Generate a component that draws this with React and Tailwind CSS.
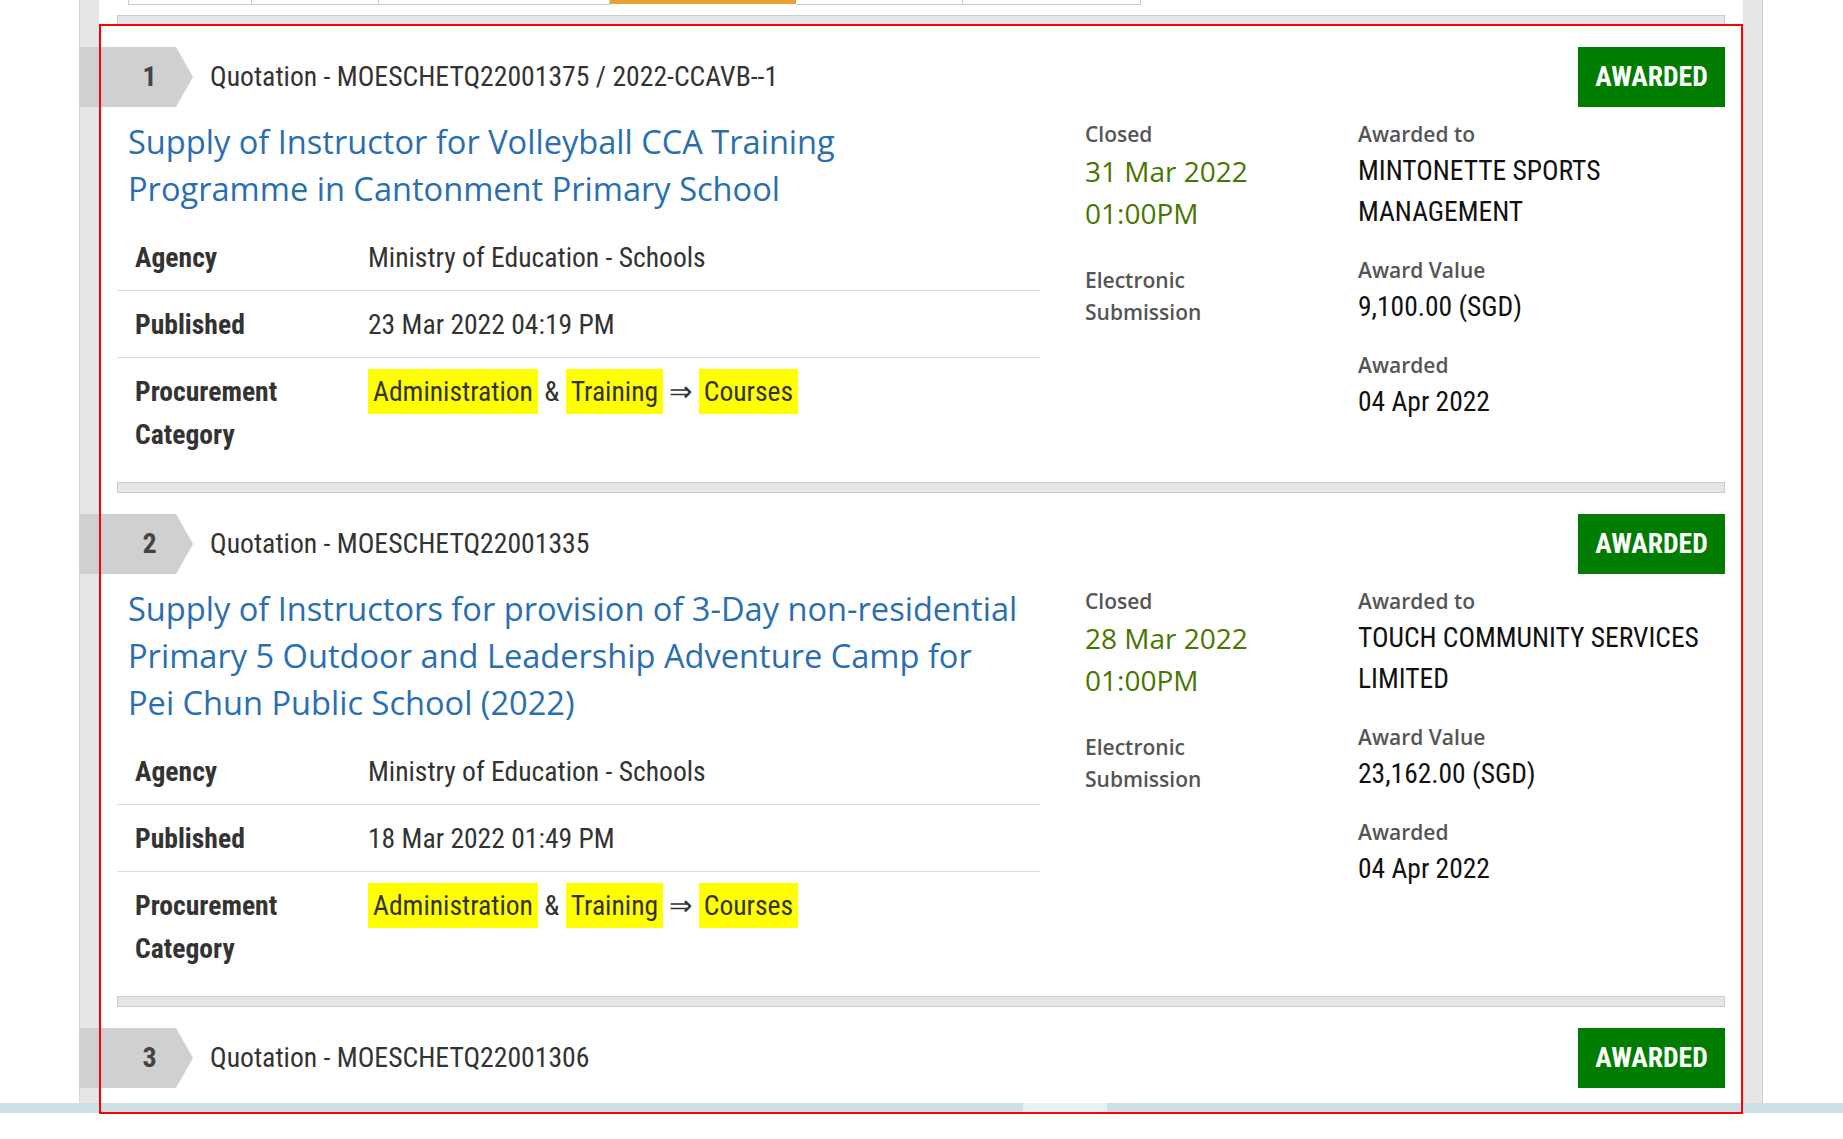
import React from 'react';

const tabs = [124, 127, 231, 186, 167, 178];

const tenders = [
  {
    no: 1,
    ref: 'Quotation - MOESCHETQ22001375 / 2022-CCAVB--1',
    title: ['Supply of Instructor for Volleyball CCA Training', 'Programme in Cantonment Primary School'],
    agency: 'Ministry of Education - Schools',
    published: '23 Mar 2022 04:19 PM',
    closedDate: '31 Mar 2022',
    closedTime: '01:00PM',
    awardedTo: 'MINTONETTE SPORTS MANAGEMENT',
    value: '9,100.00 (SGD)',
    awardedOn: '04 Apr 2022',
  },
  {
    no: 2,
    ref: 'Quotation - MOESCHETQ22001335',
    title: [
      'Supply of Instructors for provision of 3-Day non-residential',
      'Primary 5 Outdoor and Leadership Adventure Camp for',
      'Pei Chun Public School (2022)',
    ],
    agency: 'Ministry of Education - Schools',
    published: '18 Mar 2022 01:49 PM',
    closedDate: '28 Mar 2022',
    closedTime: '01:00PM',
    awardedTo: 'TOUCH COMMUNITY SERVICES LIMITED',
    value: '23,162.00 (SGD)',
    awardedOn: '04 Apr 2022',
  },
  {
    no: 3,
    ref: 'Quotation - MOESCHETQ22001306',
  },
];

const Mark = ({ children }) => (
  <span className="bg-[#ffff00] px-[5px] py-[6px]">{children}</span>
);

const Label = ({ children }) => (
  <div className="font-['Open_Sans',sans-serif] text-[21px] font-semibold leading-[32px] text-[#555]">{children}</div>
);

const TenderRow = ({ t }) => (
  <div>
    {/* header */}
    <div className="-ml-[38px] flex h-[60px] items-center">
      <div className="flex h-[60px] w-[114px] shrink-0 items-center bg-[#d0d0d0] [clip-path:polygon(0_0,97px_0,114px_50%,97px_100%,0_100%)]">
        <span className="w-[97px] pl-[44px] text-center text-[28px] font-bold text-[#444]">{t.no}</span>
      </div>
      <span className="ml-[17px] text-[27.7px] text-[#333]">{t.ref}</span>
      <span className="ml-auto flex h-[60px] w-[147px] items-center justify-center bg-[#007c00] text-[27.6px] font-bold text-white">
        AWARDED
      </span>
    </div>

    {t.title && (
      <div className="mt-[11px] flex items-start">
        <div className="w-[923px] shrink-0">
          <div className="pl-[11px] font-['Open_Sans',sans-serif] text-[32.6px] leading-[47px] text-[#2a6eb2]">
            {t.title.map((line) => (
              <span key={line} className="block whitespace-nowrap">{line}</span>
            ))}
          </div>
          <div className="mt-[12px] text-[27.6px] leading-[43px] text-[#333]">
            <div className="flex border-b border-[#ddd] pt-[12px] pb-[11px]">
              <div className="w-[251px] shrink-0 pl-[18px] font-bold">Agency</div>
              <div>{t.agency}</div>
            </div>
            <div className="flex border-b border-[#ddd] pt-[12px] pb-[11px]">
              <div className="w-[251px] shrink-0 pl-[18px] font-bold">Published</div>
              <div>{t.published}</div>
            </div>
            <div className="flex pt-[12px] pb-[15px]">
              <div className="w-[251px] shrink-0 pl-[18px] font-bold">
                Procurement
                <br />
                Category
              </div>
              <div>
                <Mark>Administration</Mark> &amp; <Mark>Training</Mark> ⇒ <Mark>Courses</Mark>
              </div>
            </div>
          </div>
        </div>

        <div className="ml-[45px] w-[273px] shrink-0 pr-[70px]">
          <Label>Closed</Label>
          <div className="font-['Open_Sans',sans-serif] text-[28px] leading-[42px] text-[#4a7500]">
            {t.closedDate}
            <br />
            {t.closedTime}
          </div>
          <div className="mt-[30px]">
            <Label>Electronic Submission</Label>
          </div>
        </div>

        <div className="flex-1 text-[27.5px] leading-[41px] text-[#111]">
          <Label>Awarded to</Label>
          <div className="mb-[22px]">{t.awardedTo}</div>
          <Label>Award Value</Label>
          <div className="mb-[22px]">{t.value}</div>
          <Label>Awarded</Label>
          <div>{t.awardedOn}</div>
        </div>
      </div>
    )}

    {t.title && <div className="mt-[11px] mb-[21px] h-[11px] border border-[#ccc] bg-[#e6e6e6]" />}
  </div>
);

export default function App() {
  return (
    <div className="relative h-[1139px] w-full overflow-hidden bg-white font-['Roboto_Condensed',sans-serif]">
      <div className="flex h-[1103px] overflow-hidden">
        <div className="w-[79px] shrink-0" />
        <div className="w-[20px] shrink-0 border-l border-[#d6d6d6] bg-[#e6e6e6]" />
        <main className="w-[1644px] shrink-0 bg-white px-[18px]">
          {/* tabs, cut off at the top */}
          <div className="ml-[11px] flex h-[5px]">
            {tabs.map((w, i) => (
              <div
                key={i}
                style={{ width: w }}
                className={
                  i === 3
                    ? 'h-[4px] bg-[#e8a030]'
                    : i === 0
                    ? 'border-x border-b border-[#ccc]'
                    : 'border-r border-b border-[#ccc]'
                }
              />
            ))}
          </div>
          <div className="mt-[10px] mb-[21px] h-[11px] border border-[#ccc] bg-[#e6e6e6]" />

          {tenders.map((t) => (
            <TenderRow key={t.no} t={t} />
          ))}
        </main>
        <div className="w-[20px] shrink-0 border-r border-[#cfcfcf] bg-[#e6e6e6]" />
      </div>

      {/* horizontal scroll bar */}
      <div className="flex h-[10px] bg-[#cde0e6]">
        <div className="ml-[1023px] w-[84px] bg-[#e8f0f2]" />
      </div>

      {/* annotation frame */}
      <div className="pointer-events-none absolute top-[24px] left-[99px] h-[1090px] w-[1644px] border-2 border-[#ff0000]" />
    </div>
  );
}
